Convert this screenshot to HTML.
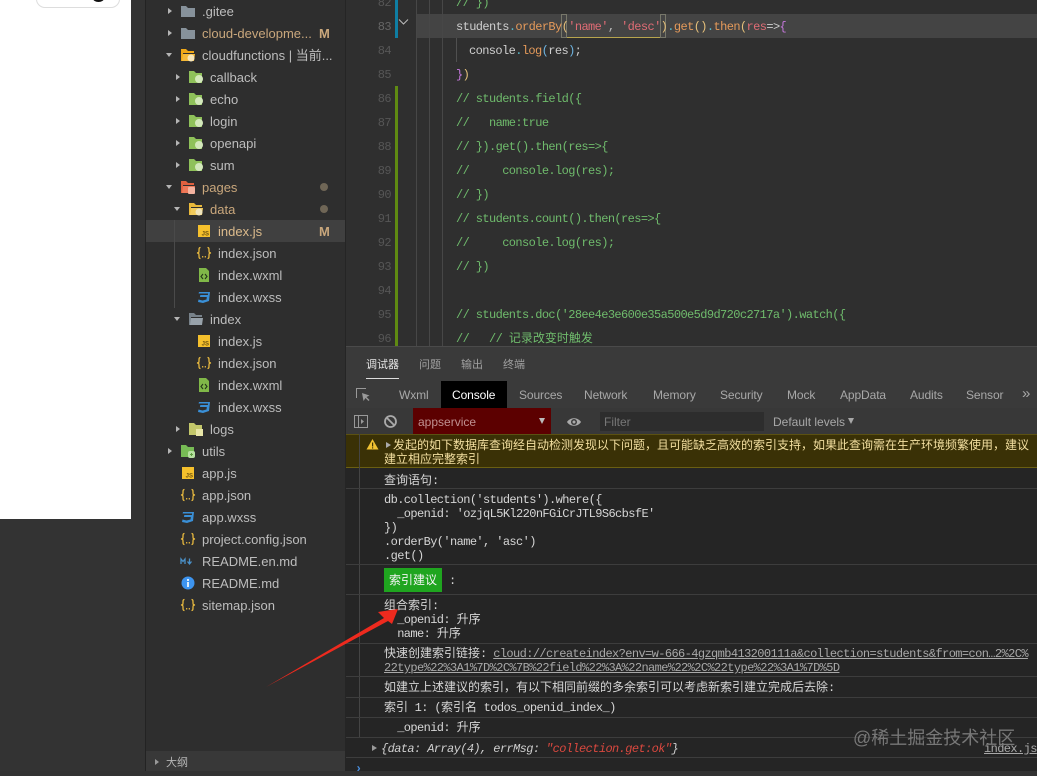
<!DOCTYPE html>
<html><head><meta charset="utf-8"><style>
html,body{margin:0;padding:0;width:1037px;height:771px;overflow:hidden;background:#323232}
*{box-sizing:border-box}
.a{position:absolute}
.t{position:absolute;height:22px;margin-top:1px;font:13px/22px "Liberation Sans","Noto Sans CJK SC",sans-serif;color:#bdbdbd;white-space:pre}
.m{color:#c9a77c}
.ic{position:absolute;width:16px;height:16px}
.ar{position:absolute;width:0;height:0;border-left:4px solid #b5b5b5;border-top:3.5px solid transparent;border-bottom:3.5px solid transparent}
.ad{position:absolute;width:0;height:0;border-top:4px solid #b5b5b5;border-left:3.5px solid transparent;border-right:3.5px solid transparent}
.n{position:absolute;left:370px;width:21px;margin-top:1px;text-align:right;font:12px/24px "Liberation Mono",monospace;letter-spacing:-.6px;color:#565656;height:24px}
.c{position:absolute;left:456px;height:24px;margin-top:1px;font:12px/24px "Liberation Mono","Noto Sans CJK SC",monospace;letter-spacing:-.6px;white-space:pre;color:#6fbb6c}
.c i{font-style:normal}
.tab{position:absolute;top:387px;font:12px/16px "Liberation Sans",sans-serif;color:#a8a8a8;white-space:pre;letter-spacing:-.1px}
.cn{position:absolute;top:358px;font:11px/14px "Liberation Sans","Noto Sans CJK SC",sans-serif;color:#a0a0a0;white-space:pre}
.l{position:absolute;left:384px;margin-top:1px;font:12px/14px "Liberation Mono","Noto Sans CJK SC",monospace;letter-spacing:-.6px;color:#d6d6d6;white-space:pre}
.l b{font-weight:400;letter-spacing:0}
.h{position:absolute;left:346px;right:0;height:1px;background:#3d3d3d}
</style></head><body>
<svg width="0" height="0" style="position:absolute"><defs>
<symbol id="fg" viewBox="0 0 16 16"><path d="M1 3h5l2 2h7v9H1z" fill="#87929b"/></symbol>
<symbol id="fo" viewBox="0 0 16 16"><path d="M1 2h5l2 2h6v2H3v8H1z" fill="#f0a818"/><path d="M3 7h12l-1 7H2z" fill="#f4b93a"/><circle cx="11" cy="11" r="3.5" fill="#f6e6bd"/></symbol>
<symbol id="fc" viewBox="0 0 16 16"><path d="M1 2h5l2 2h6v10H1z" fill="#8fc15a"/><circle cx="11" cy="10" r="4" fill="#d3e8bb"/></symbol>
<symbol id="fp" viewBox="0 0 16 16"><path d="M1 2h5l2 2h6v2H3v8H1z" fill="#e0603f"/><path d="M3 7h12l-1 7H2z" fill="#ee7858"/><rect x="8" y="8" width="7" height="7" rx="1" fill="#f3b3a0"/></symbol>
<symbol id="fy" viewBox="0 0 16 16"><path d="M1 2h5l2 2h6v2H3v8H1z" fill="#e9b93a"/><path d="M3 7h12l-1 7H2z" fill="#f1cb5c"/><circle cx="11" cy="11" r="3.5" fill="#efe4bd"/></symbol>
<symbol id="fi" viewBox="0 0 16 16"><path d="M1 2h5l2 2h6v2H3v8H1z" fill="#78828a"/><path d="M3 7h12l-1 7H2z" fill="#98a2aa"/></symbol>
<symbol id="fl" viewBox="0 0 16 16"><path d="M1 2h5l2 2h6v10H1z" fill="#c3c76a"/><rect x="8" y="8" width="7" height="7" fill="#e8e6a8"/></symbol>
<symbol id="fu" viewBox="0 0 16 16"><path d="M1 2h5l2 2h6v10H1z" fill="#77bb55"/><rect x="8" y="8" width="7" height="7" rx="2" fill="#b6dfa0"/><path d="M10 11.500h3M11.500 10v3" stroke="#5d9c40"/></symbol>
<symbol id="js" viewBox="0 0 16 16"><rect x="2" y="2" width="12" height="12" fill="#f5c02c"/><text x="13" y="12.500" text-anchor="end" font-family="Liberation Sans" font-size="6" font-weight="700" fill="#6b5210">JS</text></symbol>
<symbol id="jn" viewBox="0 0 16 16"><path d="M4.500 2.500C3 2.500 3 3.500 3 5.500S3 7.800 1 8C3 8.200 3 8.500 3 10.500S3 13.500 4.500 13.500M11.500 2.500C13 2.500 13 3.500 13 5.500S13 7.800 15 8C13 8.200 13 8.500 13 10.500S13 13.500 11.500 13.500" fill="none" stroke="#e8b93f" stroke-width="1.300"/><rect x="6" y="11" width="1.300" height="1.500" fill="#d8ab3a"/><rect x="8.700" y="11" width="1.300" height="1.500" fill="#d8ab3a"/></symbol>
<symbol id="wx" viewBox="0 0 16 16"><path d="M3 1h7l3 3v11H3z" fill="#80b848"/><path d="M7 7 5 9.500 7 12M9 7l2 2.500L9 12" stroke="#24381a" stroke-width="1.100" fill="none"/></symbol>
<symbol id="ss" viewBox="0 0 16 16"><path d="M3 3h11l-1 9-6 2-5-1 .5-2.500 4 1 4-1 .3-2.500H4l.3-2h7.600l.2-1.500H2.600z" fill="#3a8fd6"/></symbol>
</defs></svg>

<!-- left white preview -->
<div class="a" style="left:0;top:0;width:131px;height:519px;background:#fff"></div>
<div class="a" style="left:36px;top:-12px;width:84px;height:20px;border:1px solid #ddd;border-radius:9px;background:#fff"></div>
<div class="a" style="left:93px;top:-5px;width:11px;height:7px;border-radius:50%;background:#111"></div>
<div class="a" style="left:131px;top:0;width:14px;height:771px;background:#333"></div>
<div class="a" style="left:0;top:519px;width:131px;height:252px;background:#333"></div>
<div class="a" style="left:145px;top:0;width:1px;height:771px;background:#232323"></div>
<!-- sidebar -->
<div class="a" style="left:146px;top:0;width:199px;height:771px;background:#2e2e2e"></div>
<div class="a" style="left:146px;top:220px;width:199px;height:22px;background:#404040"></div>
<div class="a" style="left:174px;top:220px;width:1px;height:88px;background:#4a4a4a"></div>
<div class="a" style="left:146px;top:751px;width:199px;height:20px;background:#383838"></div>
<div class="a" style="left:345px;top:0;width:1px;height:771px;background:#252525"></div>

<div class="ar" style="left:168px;top:8px"></div><svg class="ic" style="left:180px;top:3px"><use href="#fg"/></svg><div class="t" style="left:202px;top:0">.gitee</div>
<div class="ar" style="left:168px;top:30px"></div><svg class="ic" style="left:180px;top:25px"><use href="#fg"/></svg><div class="t m" style="left:202px;top:22px">cloud-developme...</div><div class="t m" style="left:319px;top:22px;font-weight:700">M</div>
<div class="ad" style="left:166px;top:53px"></div><svg class="ic" style="left:180px;top:47px"><use href="#fo"/></svg><div class="t" style="left:202px;top:44px">cloudfunctions | 当前...</div>
<div class="ar" style="left:176px;top:74px"></div><svg class="ic" style="left:188px;top:69px"><use href="#fc"/></svg><div class="t" style="left:210px;top:66px">callback</div>
<div class="ar" style="left:176px;top:96px"></div><svg class="ic" style="left:188px;top:91px"><use href="#fc"/></svg><div class="t" style="left:210px;top:88px">echo</div>
<div class="ar" style="left:176px;top:118px"></div><svg class="ic" style="left:188px;top:113px"><use href="#fc"/></svg><div class="t" style="left:210px;top:110px">login</div>
<div class="ar" style="left:176px;top:140px"></div><svg class="ic" style="left:188px;top:135px"><use href="#fc"/></svg><div class="t" style="left:210px;top:132px">openapi</div>
<div class="ar" style="left:176px;top:162px"></div><svg class="ic" style="left:188px;top:157px"><use href="#fc"/></svg><div class="t" style="left:210px;top:154px">sum</div>
<div class="ad" style="left:166px;top:185px"></div><svg class="ic" style="left:180px;top:179px"><use href="#fp"/></svg><div class="t m" style="left:202px;top:176px">pages</div>
<div class="a" style="left:320px;top:183px;width:8px;height:8px;border-radius:50%;background:#6f6656"></div>
<div class="ad" style="left:174px;top:207px"></div><svg class="ic" style="left:188px;top:201px"><use href="#fy"/></svg><div class="t m" style="left:210px;top:198px">data</div>
<div class="a" style="left:320px;top:205px;width:8px;height:8px;border-radius:50%;background:#6f6656"></div>
<svg class="ic" style="left:196px;top:223px"><use href="#js"/></svg><div class="t" style="left:218px;top:220px;color:#dcbb8c">index.js</div><div class="t m" style="left:319px;top:220px;font-weight:700">M</div>
<svg class="ic" style="left:196px;top:245px"><use href="#jn"/></svg><div class="t" style="left:218px;top:242px">index.json</div>
<svg class="ic" style="left:196px;top:267px"><use href="#wx"/></svg><div class="t" style="left:218px;top:264px">index.wxml</div>
<svg class="ic" style="left:196px;top:289px"><use href="#ss"/></svg><div class="t" style="left:218px;top:286px">index.wxss</div>
<div class="ad" style="left:174px;top:317px"></div><svg class="ic" style="left:188px;top:311px"><use href="#fi"/></svg><div class="t" style="left:210px;top:308px">index</div>
<svg class="ic" style="left:196px;top:333px"><use href="#js"/></svg><div class="t" style="left:218px;top:330px">index.js</div>
<svg class="ic" style="left:196px;top:355px"><use href="#jn"/></svg><div class="t" style="left:218px;top:352px">index.json</div>
<svg class="ic" style="left:196px;top:377px"><use href="#wx"/></svg><div class="t" style="left:218px;top:374px">index.wxml</div>
<svg class="ic" style="left:196px;top:399px"><use href="#ss"/></svg><div class="t" style="left:218px;top:396px">index.wxss</div>
<div class="ar" style="left:176px;top:426px"></div><svg class="ic" style="left:188px;top:421px"><use href="#fl"/></svg><div class="t" style="left:210px;top:418px">logs</div>
<div class="ar" style="left:168px;top:448px"></div><svg class="ic" style="left:180px;top:443px"><use href="#fu"/></svg><div class="t" style="left:202px;top:440px">utils</div>
<svg class="ic" style="left:180px;top:465px"><use href="#js"/></svg><div class="t" style="left:202px;top:462px">app.js</div>
<svg class="ic" style="left:180px;top:487px"><use href="#jn"/></svg><div class="t" style="left:202px;top:484px">app.json</div>
<svg class="ic" style="left:180px;top:509px"><use href="#ss"/></svg><div class="t" style="left:202px;top:506px">app.wxss</div>
<svg class="ic" style="left:180px;top:531px"><use href="#jn"/></svg><div class="t" style="left:202px;top:528px">project.config.json</div>
<svg class="ic" style="left:180px;top:553px" viewBox="0 0 16 16"><path d="M1 11V6l2 2.500L5 6v5M9.500 5.500V10M7.500 8.500l2 2.500 2-2.500" stroke="#4a90c8" stroke-width="1.300" fill="none"/></svg><div class="t" style="left:202px;top:550px">README.en.md</div>
<svg class="ic" style="left:180px;top:575px" viewBox="0 0 16 16"><circle cx="8" cy="8" r="6.500" fill="#3d94ef"/><rect x="7" y="7" width="2" height="5" fill="#dcecfb"/><rect x="7" y="4" width="2" height="2" fill="#dcecfb"/></svg><div class="t" style="left:202px;top:572px">README.md</div>
<svg class="ic" style="left:180px;top:597px"><use href="#jn"/></svg><div class="t" style="left:202px;top:594px">sitemap.json</div>
<div class="ar" style="left:155px;top:759px;border-left-color:#999"></div><div class="t" style="left:166px;top:751px;font-size:11px;color:#b5b5b5;line-height:22px">大纲</div>

<!-- editor -->
<div class="a" style="left:346px;top:0;width:691px;height:346px;background:#2f2f2f"></div>
<div class="a" style="left:416px;top:14px;width:621px;height:24px;background:#444"></div>
<div class="a" style="left:395px;top:0;width:3px;height:38px;background:#0f7ea3"></div>
<div class="a" style="left:395px;top:86px;width:3px;height:260px;background:#5f8a12"></div>
<div class="a" style="left:416px;top:0;width:1px;height:346px;background:#474747"></div>
<div class="a" style="left:429px;top:0;width:1px;height:346px;background:#474747"></div>
<div class="a" style="left:442px;top:0;width:1px;height:346px;background:#474747"></div>
<div class="a" style="left:456px;top:38px;width:1px;height:24px;background:#505050"></div>
<svg class="a" style="left:398px;top:18px" width="12" height="8"><path d="M1 1.500 5.500 6 10 1.500" stroke="#bbb" fill="none"/></svg>
<div class="a" style="left:561px;top:14px;width:6px;height:24px;border:1px solid #77776a"></div>
<div class="a" style="left:660px;top:14px;width:6px;height:24px;border:1px solid #77776a"></div>
<div class="a" style="left:567px;top:37px;width:93px;height:1px;background:#b7a54e"></div>

<div class="n" style="top:-10px">82</div><div class="c" style="top:-10px">// })</div>
<div class="n" style="top:14px;color:#666">83</div><div class="c" style="top:14px;color:#cfcfcf">students<i style="color:#59b8c8">.</i><i style="color:#e59a5a">orderBy</i><i style="color:#e5c07b">(</i><i style="color:#e06c75">'name'</i><i style="color:#bbb">, </i><i style="color:#e06c75">'desc'</i><i style="color:#e5c07b">)</i><i style="color:#59b8c8">.</i><i style="color:#e59a5a">get</i><i style="color:#e5c07b">()</i><i style="color:#59b8c8">.</i><i style="color:#e59a5a">then</i><i style="color:#e5c07b">(</i><i style="color:#e06c75">res</i><i style="color:#cfcfcf">=&gt;</i><i style="color:#c678dd">{</i></div>
<div class="n" style="top:38px">84</div><div class="c" style="top:38px;left:469px;color:#cfcfcf">console<i style="color:#59b8c8">.</i><i style="color:#e59a5a">log</i><i style="color:#6fb4e0">(</i>res<i style="color:#6fb4e0">)</i>;</div>
<div class="n" style="top:62px">85</div><div class="c" style="top:62px"><i style="color:#c678dd">}</i><i style="color:#e5c07b">)</i></div>
<div class="n" style="top:86px">86</div><div class="c" style="top:86px">// students.field({</div>
<div class="n" style="top:110px">87</div><div class="c" style="top:110px">//   name:true</div>
<div class="n" style="top:134px">88</div><div class="c" style="top:134px">// }).get().then(res=&gt;{</div>
<div class="n" style="top:158px">89</div><div class="c" style="top:158px">//     console.log(res);</div>
<div class="n" style="top:182px">90</div><div class="c" style="top:182px">// })</div>
<div class="n" style="top:206px">91</div><div class="c" style="top:206px">// students.count().then(res=&gt;{</div>
<div class="n" style="top:230px">92</div><div class="c" style="top:230px">//     console.log(res);</div>
<div class="n" style="top:254px">93</div><div class="c" style="top:254px">// })</div>
<div class="n" style="top:278px">94</div>
<div class="n" style="top:302px">95</div><div class="c" style="top:302px">// students.doc('28ee4e3e600e35a500e5d9d720c2717a').watch({</div>
<div class="n" style="top:326px">96</div><div class="c" style="top:326px">//   // <i style="letter-spacing:0">记录改变时触发</i></div>

<!-- panel -->
<div class="a" style="left:346px;top:346px;width:691px;height:62px;background:#3a3a3a"></div>
<div class="a" style="left:346px;top:346px;width:691px;height:1px;background:#4a4a4a"></div>
<div class="cn" style="left:366px;color:#e6e6e6">调试器</div><div class="cn" style="left:419px">问题</div><div class="cn" style="left:461px">输出</div><div class="cn" style="left:503px">终端</div>
<div class="a" style="left:366px;top:378px;width:33px;height:1px;background:#ddd"></div>
<div class="a" style="left:441px;top:381px;width:66px;height:27px;background:#000"></div>
<svg class="a" style="left:355px;top:387px" width="16" height="16"><path d="M1.500 11V1.500H11" stroke="#999" fill="none"/><path d="M7 6l1.500 8 2-3 3 3 1-1-3-3 3-1.500z" fill="#999"/></svg>
<div class="tab" style="left:399px">Wxml</div><div class="tab" style="left:452px;color:#fff">Console</div><div class="tab" style="left:519px">Sources</div><div class="tab" style="left:584px">Network</div><div class="tab" style="left:653px">Memory</div><div class="tab" style="left:720px">Security</div><div class="tab" style="left:787px">Mock</div><div class="tab" style="left:840px">AppData</div><div class="tab" style="left:910px">Audits</div><div class="tab" style="left:966px">Sensor</div><div class="tab" style="left:1022px;font-size:15px;line-height:14px">»</div>

<div class="a" style="left:346px;top:408px;width:691px;height:26px;background:#383838"></div>
<svg class="a" style="left:353px;top:414px" width="16" height="16"><rect x="1.500" y="1.500" width="13" height="12" fill="none" stroke="#999"/><path d="M5.500 2v11" stroke="#999"/><path d="M8 5l3 2.500L8 10z" fill="#999"/></svg>
<svg class="a" style="left:383px;top:414px" width="15" height="15"><circle cx="7.500" cy="7.500" r="5.500" fill="none" stroke="#aaa" stroke-width="1.800"/><path d="M3.500 3.500l8 8" stroke="#aaa" stroke-width="1.800"/></svg>
<div class="a" style="left:413px;top:408px;width:138px;height:26px;background:#5c0000"></div>
<div class="a" style="left:418px;top:414px;font:12px/16px 'Liberation Sans',sans-serif;color:#c09090">appservice</div>
<div class="a" style="left:539px;top:418px;border-top:6px solid #bbb;border-left:3.500px solid transparent;border-right:3.500px solid transparent"></div>
<svg class="a" style="left:566px;top:414px" width="16" height="16"><path d="M1 8c3-5 11-5 14 0-3 5-11 5-14 0z" fill="#aaa"/><circle cx="8" cy="8" r="3" fill="#3a3a3a"/><circle cx="8" cy="8" r="1.500" fill="#aaa"/></svg>
<div class="a" style="left:600px;top:412px;width:164px;height:19px;background:#2d2d2d"></div>
<div class="a" style="left:604px;top:414px;font:12px/16px 'Liberation Sans',sans-serif;color:#777">Filter</div>
<div class="a" style="left:773px;top:414px;font:12px/16px 'Liberation Sans',sans-serif;color:#a8a8a8">Default levels</div>
<div class="a" style="left:848px;top:418px;border-top:6px solid #a8a8a8;border-left:3.500px solid transparent;border-right:3.500px solid transparent"></div>

<!-- console -->
<div class="a" style="left:346px;top:434px;width:691px;height:337px;background:#252525"></div>
<div class="a" style="left:346px;top:434px;width:691px;height:34px;background:#3a3106;border-top:1px solid #5b5112;border-bottom:1px solid #6a5f12"></div>
<div class="a" style="left:359px;top:434px;width:1px;height:303px;background:#444"></div>
<svg class="a" style="left:366px;top:438px" width="13" height="12"><path d="M6.500 1 12.500 11.500H.5z" fill="#f1c232"/><rect x="6" y="4.500" width="1.200" height="4" fill="#3a3106"/><rect x="6" y="9.300" width="1.200" height="1.200" fill="#3a3106"/></svg>
<div class="a" style="left:386px;top:442px;border-left:5px solid #aaa;border-top:3.500px solid transparent;border-bottom:3.500px solid transparent"></div>
<div class="l" style="left:393px;top:438px;color:#f3dfa0;letter-spacing:0">发起的如下数据库查询经自动检测发现以下问题，且可能缺乏高效的索引支持，如果此查询需在生产环境频繁使用，建议</div>
<div class="l" style="top:452px;color:#f3dfa0;letter-spacing:0">建立相应完整索引</div>

<div class="l" style="top:473px"><b>查询语句</b>:</div>
<div class="h" style="top:488px"></div>
<div class="l" style="top:492px">db.collection('students').where({</div>
<div class="l" style="top:506px">  _openid: 'ozjqL5Kl220nFGiCrJTL9S6cbsfE'</div>
<div class="l" style="top:520px">})</div>
<div class="l" style="top:534px">.orderBy('name', 'asc')</div>
<div class="l" style="top:548px">.get()</div>
<div class="h" style="top:564px"></div>
<div class="a" style="left:384px;top:568px;width:58px;height:24px;background:#1fa51f;color:#f4f4f4;font:12px/24px 'Liberation Sans','Noto Sans CJK SC',sans-serif;text-align:center">索引建议</div>
<div class="l" style="left:449px;top:573px">:</div>
<div class="h" style="top:594px"></div>
<div class="l" style="top:598px"><b>组合索引</b>:</div>
<div class="l" style="top:612px">  _openid: <b>升序</b></div>
<div class="l" style="top:626px">  name: <b>升序</b></div>
<div class="h" style="top:643px"></div>
<div class="l" style="top:646px"><b>快速创建索引链接</b>: <span style="color:#a8a8a8;text-decoration:underline">cloud://createindex?env=w-666-4gzqmb413200111a&amp;collection=students&amp;from=con…2%2C%</span></div>
<div class="l" style="top:660px;color:#a8a8a8;text-decoration:underline">22type%22%3A1%7D%2C%7B%22field%22%3A%22name%22%2C%22type%22%3A1%7D%5D</div>
<div class="h" style="top:676px"></div>
<div class="l" style="top:680px"><b>如建立上述建议的索引，有以下相同前缀的多余索引可以考虑新索引建立完成后去除</b>:</div>
<div class="h" style="top:697px"></div>
<div class="l" style="top:700px"><b>索引</b> 1: (<b>索引名</b> todos_openid_index_)</div>
<div class="h" style="top:717px"></div>
<div class="l" style="top:720px">  _openid: <b>升序</b></div>
<div class="h" style="top:737px"></div>
<div class="a" style="left:372px;top:745px;border-left:5px solid #999;border-top:3.500px solid transparent;border-bottom:3.500px solid transparent"></div>
<div class="l" style="left:381px;top:741px;font-style:italic;color:#cfcfcf">{data: Array(4), errMsg: <span style="color:#d9483f">"collection.get:ok"</span>}</div>
<div class="l" style="left:984px;top:741px;color:#a8a8a8;text-decoration:underline">index.js</div>
<div class="h" style="top:757px"></div>
<div class="a" style="left:355px;top:762px;font:12px/14px 'Liberation Mono',monospace;font-weight:700;color:#4a8fe0">›</div>
<div class="a" style="left:853px;top:726px;font:18px/24px 'Liberation Sans','Noto Sans CJK SC',sans-serif;color:#777;white-space:pre">@稀土掘金技术社区</div>

<svg class="a" style="left:0;top:0;pointer-events:none" width="1037" height="771"><path d="M266 687 384 618 378 612 398 609 392 624 388 621z" fill="#ee2a1e"/></svg>
</body></html>
